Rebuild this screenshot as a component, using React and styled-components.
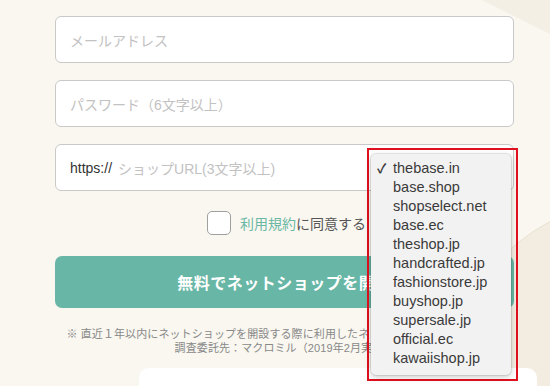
import React from 'react'
import styled, { createGlobalStyle } from 'styled-components'

const GlobalStyle = createGlobalStyle`
  html, body {
    margin: 0;
    padding: 0;
    background: #f9f7f0;
    overflow: hidden;
  }
  * { box-sizing: border-box; }
`

const FONT = `"Liberation Sans", "Noto Sans CJK JP", sans-serif`

const Page = styled.div`
  position: relative;
  width: 550px;
  height: 386px;
  overflow: hidden;
  font-family: ${FONT};
`

const Decor = styled.svg`
  position: absolute;
  inset: 0;
  z-index: 0;
`

const Form = styled.div`
  position: relative;
  z-index: 1;
  width: 459px;
  margin-left: 55px;
  padding-top: 16px;
  display: flex;
  flex-direction: column;
  gap: 17px;
`

const Field = styled.div`
  height: 47px;
  background: #fff;
  border: 1.5px solid #c9c9c9;
  border-radius: 6px;
  display: flex;
  align-items: center;
  padding: 0 14px;
  font-size: 14px;
`

const Prefix = styled.span`
  color: #333;
  margin-right: 6px;
`

const Placeholder = styled.span`
  color: #c2c2c2;
`

const AgreeRow = styled.label`
  margin-top: 3px;
  display: flex;
  align-items: center;
  justify-content: center;
  gap: 9px;
  padding-left: 4px;
  font-size: 14px;
  color: #555;
`

const Check = styled.span`
  width: 24px;
  height: 24px;
  background: #fff;
  border: 1.5px solid #a0a0a0;
  border-radius: 5px;
`

const TermsLink = styled.span`
  color: #6bb7a5;
`

const SubmitButton = styled.div`
  margin-top: 4px;
  height: 52px;
  border-radius: 7px;
  background: #68b6a5;
  color: #fff;
  font-size: 16px;
  font-weight: bold;
  letter-spacing: 0.5px;
  display: flex;
  align-items: center;
  justify-content: center;
`

const Note = styled.p`
  margin: 2px 0 0;
  font-size: 11px;
  line-height: 14px;
  letter-spacing: 0.1px;
  color: #888;
  text-align: center;
  white-space: nowrap;
`

const Card = styled.div`
  margin-top: -4px;
  margin-left: 84px;
  width: 398px;
  height: 60px;
  background: #fff;
  border-radius: 10px;
`

const Highlight = styled.div`
  position: absolute;
  z-index: 2;
  left: 367px;
  top: 148px;
  width: 151px;
  height: 233px;
  border: 2px solid #e0101e;
`

const Menu = styled.ul`
  position: absolute;
  z-index: 3;
  left: 371px;
  top: 154px;
  width: 140px;
  margin: 0;
  padding: 5px 0 7px;
  list-style: none;
  background: #f3f2f2;
  border-radius: 5px;
  box-shadow: 0 0 0 1px rgba(0, 0, 0, 0.08), 0 2px 6px rgba(0, 0, 0, 0.22);
`

const MenuItem = styled.li`
  position: relative;
  height: 19px;
  line-height: 19px;
  padding-left: 22px;
  font-size: 14.5px;
  color: #3a3a3a;
`

const Tick = styled.span`
  position: absolute;
  left: 6px;
  top: 0;
  font-size: 13px;
  font-weight: bold;
`

const domains = [
  'thebase.in',
  'base.shop',
  'shopselect.net',
  'base.ec',
  'theshop.jp',
  'handcrafted.jp',
  'fashionstore.jp',
  'buyshop.jp',
  'supersale.jp',
  'official.ec',
  'kawaiishop.jp',
]

export default function App() {
  const selected = 'thebase.in'

  return (
    <Page>
      <GlobalStyle />
      <Decor width="550" height="386" viewBox="0 0 550 386">
        <polygon points="482,0 550,0 550,34" fill="#f3efe4" />
        <circle cx="648" cy="405" r="208" fill="#f3ede1" stroke="#e9e1d2" strokeWidth="1" />
      </Decor>

      <Form>
        <Field>
          <Placeholder>メールアドレス</Placeholder>
        </Field>
        <Field>
          <Placeholder>パスワード（6文字以上）</Placeholder>
        </Field>
        <Field>
          <Prefix>https://</Prefix>
          <Placeholder>ショップURL(3文字以上)</Placeholder>
        </Field>

        <AgreeRow>
          <Check />
          <span>
            <TermsLink>利用規約</TermsLink>に同意する
          </span>
        </AgreeRow>

        <SubmitButton>無料でネットショップを開く</SubmitButton>

        <Note>
          ※ 直近１年以内にネットショップを開設する際に利用したネットショップ作成サービス
          <br />
          調査委託先：マクロミル（2019年2月実施）
        </Note>

        <Card />
      </Form>

      <Highlight />
      <Menu>
        {domains.map((d) => (
          <MenuItem key={d}>
            {d === selected && <Tick>✓</Tick>}
            {d}
          </MenuItem>
        ))}
      </Menu>
    </Page>
  )
}
